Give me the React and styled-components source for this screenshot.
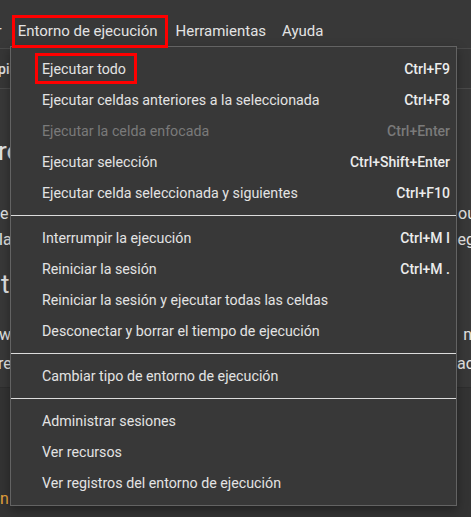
import React from 'react';
import styled, { createGlobalStyle } from 'styled-components';

const GlobalStyle = createGlobalStyle`
  html, body {
    margin: 0;
    background: #333333;
  }
  body {
    font-family: Roboto, "Liberation Sans", sans-serif;
    color: #e3e3e3;
  }
`;

const Page = styled.div`
  position: relative;
  width: 471px;
  height: 517px;
  overflow: hidden;
  background: #333333;
`;

const MenuBar = styled.div`
  display: flex;
  align-items: stretch;
  height: 33px;
  padding-top: 15px;
  margin-left: -56px;
  background: #383838;
  white-space: nowrap;
`;

const MenuBarItem = styled.div`
  position: relative;
  z-index: ${p => (p.$marked ? 3 : 1)};
  padding: 0 ${p => (p.$marked ? 10 : 8)}px 0 6px;
  margin-right: 2px;
  font-size: 15px;
  line-height: 33px;
  color: #e3e3e3;
  box-sizing: border-box;
  ${p => p.$marked && `
    outline: 3px solid #ff0000;
    outline-offset: -3px;
  `}
`;

const Toolbar = styled.div`
  height: 39px;
  border-top: 1px solid #4a4a4a;
  border-bottom: 1px solid #4a4a4a;
  background: #363636;
  display: flex;
  align-items: center;
  white-space: nowrap;
  overflow: hidden;
`;

const ToolbarText = styled.span`
  margin-left: -19px;
  font-size: 14px;
  font-weight: 500;
  color: #e3e3e3;
`;

const Cell = styled.div`
  height: 298px;
  background: #383838;
  border-bottom: 1px solid #2e2e2e;
  display: flex;
  flex-direction: column;
  overflow: hidden;
`;

const Line = styled.div`
  display: flex;
  justify-content: space-between;
  white-space: nowrap;
  font-size: ${p => p.$size || 16}px;
  height: ${p => p.$h}px;
  line-height: ${p => p.$h}px;
  margin-top: ${p => p.$gap || 0}px;
  color: #e3e3e3;
`;

const Fragment = styled.span`
  margin-left: ${p => p.$shift || 0}px;
  margin-right: ${p => p.$shiftRight || 0}px;
`;

const Footer = styled.div`
  display: flex;
  flex-direction: column;
  justify-content: flex-end;
  height: 129px;
  padding-bottom: 9px;
  box-sizing: border-box;
`;

const LinkText = styled.span`
  margin-left: -4px;
  font-size: 16px;
  color: #e8a33d;
  white-space: nowrap;
`;

const Menu = styled.div`
  position: absolute;
  z-index: 2;
  left: 10px;
  top: 46px;
  width: 447px;
  box-sizing: border-box;
  padding: 6px 0 7px;
  background: #383838;
  border: 1px solid #636363;
  box-shadow: 0 4px 10px rgba(0, 0, 0, 0.35);
`;

const Item = styled.div`
  display: flex;
  align-items: center;
  justify-content: space-between;
  height: 31px;
  padding: 0 6px 0 31px;
  font-size: 14.25px;
  color: ${p => (p.$disabled ? '#7a7a7a' : '#e3e3e3')};
  white-space: nowrap;
`;

const Label = styled.span`
  display: flex;
  align-items: center;
  height: 31px;
  box-sizing: border-box;
  ${p => p.$marked && `
    margin-left: -7px;
    padding: 0 8px 0 4px;
    border: 3px solid #ff0000;
  `}
`;

const Shortcut = styled.span`
  font-size: 14px;
  font-weight: 500;
  color: ${p => (p.$disabled ? '#7a7a7a' : '#ececec')};
`;

const Separator = styled.div`
  height: 1px;
  margin: 7px 0 6px;
  background: #dcdcdc;
`;

const groups = [
  [
    { label: 'Ejecutar todo', key: 'Ctrl+F9', marked: true },
    { label: 'Ejecutar celdas anteriores a la seleccionada', key: 'Ctrl+F8' },
    { label: 'Ejecutar la celda enfocada', key: 'Ctrl+Enter', disabled: true },
    { label: 'Ejecutar selección', key: 'Ctrl+Shift+Enter' },
    { label: 'Ejecutar celda seleccionada y siguientes', key: 'Ctrl+F10' },
  ],
  [
    { label: 'Interrumpir la ejecución', key: 'Ctrl+M I' },
    { label: 'Reiniciar la sesión', key: 'Ctrl+M .' },
    { label: 'Reiniciar la sesión y ejecutar todas las celdas' },
    { label: 'Desconectar y borrar el tiempo de ejecución' },
  ],
  [{ label: 'Cambiar tipo de entorno de ejecución' }],
  [
    { label: 'Administrar sesiones' },
    { label: 'Ver recursos' },
    { label: 'Ver registros del entorno de ejecución' },
  ],
];

export default function App() {
  return (
    <>
      <GlobalStyle />
      <Page>
        <MenuBar>
          <MenuBarItem>Insertar</MenuBarItem>
          <MenuBarItem $marked>Entorno de ejecución</MenuBarItem>
          <MenuBarItem>Herramientas</MenuBarItem>
          <MenuBarItem>Ayuda</MenuBarItem>
        </MenuBar>

        <Toolbar>
          <ToolbarText>Copiar en Drive</ToolbarText>
        </Toolbar>

        <Cell>
          <Line $size={26} $h={40} $gap={42}>
            <Fragment $shift={-2}>ro</Fragment>
          </Line>
          <Line $h={26} $gap={30}>
            <Fragment>e</Fragment>
            <Fragment $shiftRight={-5}>ou</Fragment>
          </Line>
          <Line $h={26}>
            <Fragment $shift={-1}>la</Fragment>
            <Fragment $shiftRight={-4}>eg</Fragment>
          </Line>
          <Line $size={26} $h={40} $gap={11}>
            <Fragment $shift={1}>t</Fragment>
          </Line>
          <Line $h={30} $gap={16}>
            <Fragment $shift={-1}>wi</Fragment>
            <Fragment $shiftRight={-1}>n</Fragment>
          </Line>
          <Line $h={28}>
            <Fragment $shift={-2}>re</Fragment>
            <Fragment $shiftRight={-3}>ac</Fragment>
          </Line>
        </Cell>

        <Footer>
          <LinkText>in</LinkText>
        </Footer>

        <Menu>
          {groups.map((group, gi) => (
            <React.Fragment key={gi}>
              {gi > 0 && <Separator />}
              {group.map(item => (
                <Item key={item.label} $disabled={item.disabled}>
                  <Label $marked={item.marked}>{item.label}</Label>
                  {item.key && <Shortcut $disabled={item.disabled}>{item.key}</Shortcut>}
                </Item>
              ))}
            </React.Fragment>
          ))}
        </Menu>
      </Page>
    </>
  );
}
